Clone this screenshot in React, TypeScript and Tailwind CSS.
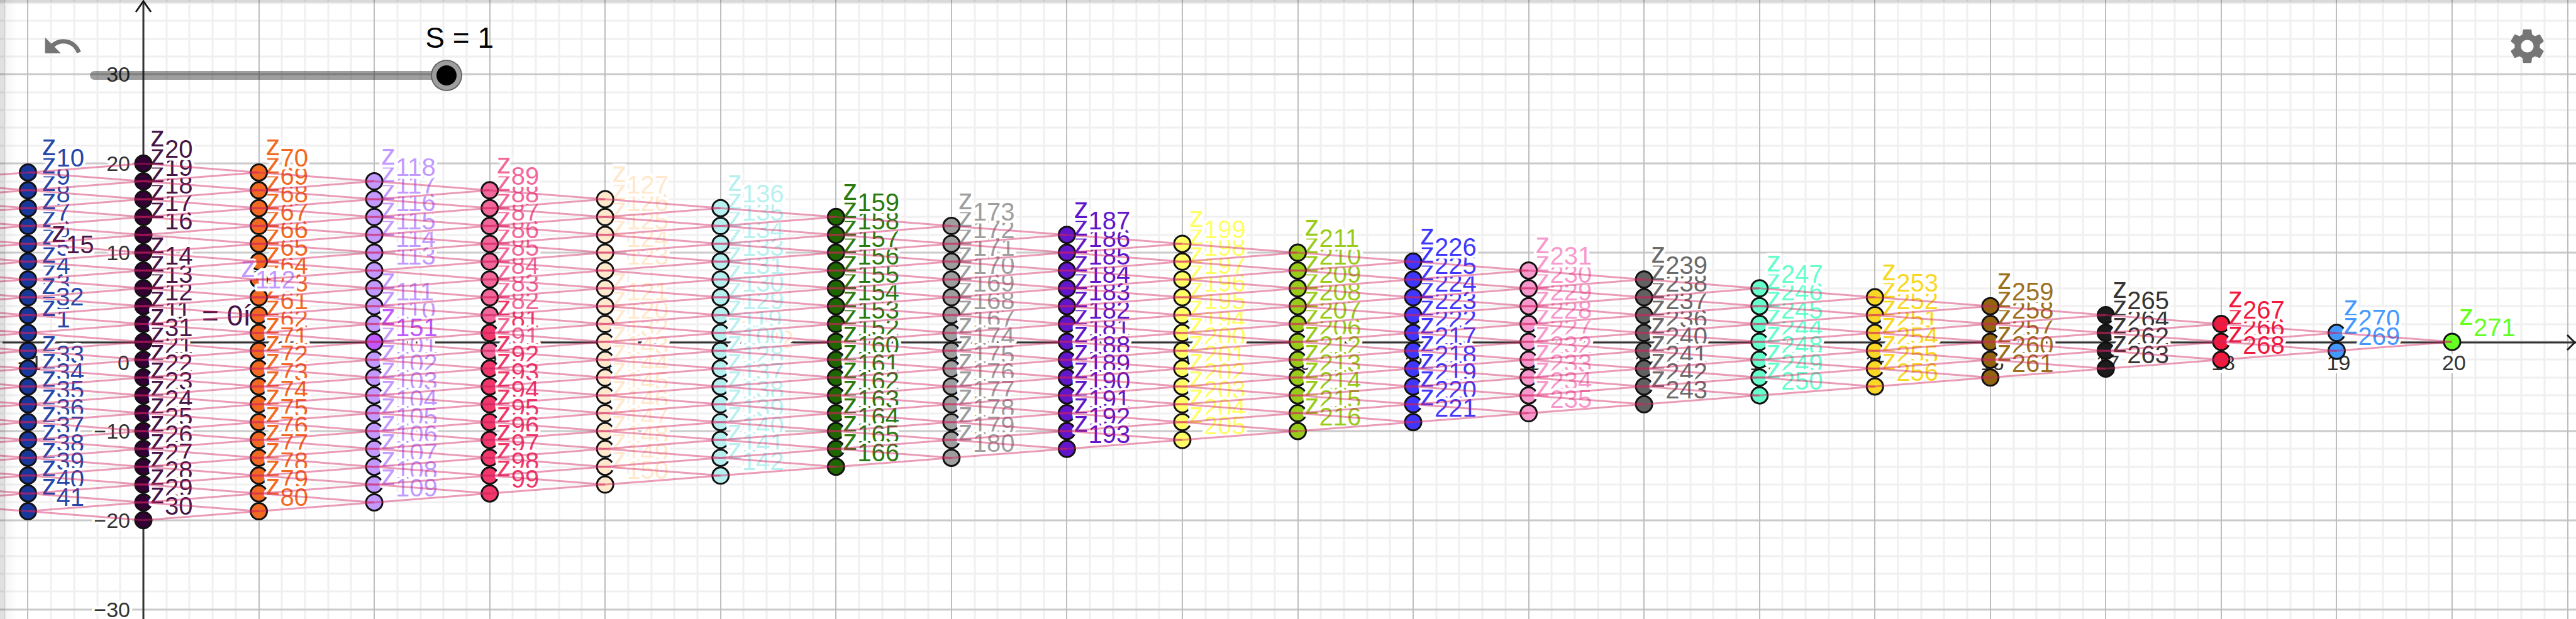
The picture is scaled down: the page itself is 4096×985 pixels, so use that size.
import { useState } from "react";
import { MdSettings, MdUndo } from "react-icons/md";

const WIDTH = 4096;
const HEIGHT = 985;
const ORIGIN_X = 228;
const ORIGIN_Y = 544;
const UNIT_X = 183.55;
const UNIT_Y = 14.19;

const px = (x: number) => ORIGIN_X + x * UNIT_X;
const py = (y: number) => ORIGIN_Y - y * UNIT_Y;

type Column = { x: number; color: string; text?: string; labels: number[] };

const columns: Column[] = [
  { x: -1, color: "#17379b", text: "#2547a8", labels: [10, 9, 8, 7, 6, 5, 4, 3, 2, 1, 32, 33, 34, 35, 36, 37, 38, 39, 40, 41] },
  { x: 0, color: "#330033", text: "#451545", labels: [20, 19, 18, 17, 16, 15, 14, 13, 12, 11, 31, 21, 22, 23, 24, 25, 26, 27, 28, 29, 30] },
  { x: 1, color: "#f26a21", labels: [70, 69, 68, 67, 66, 65, 64, 63, 61, 62, 71, 72, 73, 74, 75, 76, 77, 78, 79, 80] },
  { x: 2, color: "#c299ff", labels: [118, 117, 116, 115, 114, 113, 112, 111, 110, 151, 101, 102, 103, 104, 105, 106, 107, 108, 109] },
  { x: 3, color: "#f0386b", labels: [89, 88, 87, 86, 85, 84, 83, 82, 81, 91, 92, 93, 94, 95, 96, 97, 98, 99] },
  { x: 4, color: "#ffe8cc", labels: [127, 126, 125, 124, 123, 122, 121, 120, 132, 143, 144, 145, 146, 147, 148, 149, 150] },
  { x: 5, color: "#b8f0f0", labels: [136, 135, 134, 133, 131, 130, 129, 119, 100, 128, 137, 138, 139, 140, 141, 142] },
  { x: 6, color: "#1e6600", text: "#2a7a12", labels: [159, 158, 157, 156, 155, 154, 153, 152, 160, 161, 162, 163, 164, 165, 166] },
  { x: 7, color: "#9e9e9e", labels: [173, 172, 171, 170, 169, 168, 167, 174, 175, 176, 177, 178, 179, 180] },
  { x: 8, color: "#6116c9", labels: [187, 186, 185, 184, 183, 182, 181, 188, 189, 190, 191, 192, 193] },
  { x: 9, color: "#ffff66", labels: [199, 198, 197, 196, 195, 194, 200, 201, 202, 203, 204, 205] },
  { x: 10, color: "#99cc1a", labels: [211, 210, 209, 208, 207, 206, 212, 213, 214, 215, 216] },
  { x: 11, color: "#4037ff", labels: [226, 225, 224, 223, 222, 217, 218, 219, 220, 221] },
  { x: 12, color: "#f799cc", labels: [231, 230, 229, 228, 227, 232, 233, 234, 235] },
  { x: 13, color: "#616161", text: "#6b6b6b", labels: [239, 238, 237, 236, 240, 241, 242, 243] },
  { x: 14, color: "#66ffcc", labels: [247, 246, 245, 244, 248, 249, 250] },
  { x: 15, color: "#f8d824", labels: [253, 252, 251, 254, 255, 256] },
  { x: 16, color: "#936312", text: "#9d7020", labels: [259, 258, 257, 260, 261] },
  { x: 17, color: "#1c1c1c", text: "#363636", labels: [265, 264, 262, 263] },
  { x: 18, color: "#f11a3d", labels: [267, 266, 268] },
  { x: 19, color: "#4499ff", labels: [270, 269] },
  { x: 20, color: "#66ff22", labels: [271] },
];

const pointColors: Record<number, string> = { 151: "#bf59ff", 91: "#f2689a" };
for (let n = 82; n <= 89; n++) pointColors[n] = "#f2689a";

// Labels that were dragged away from their points.
const movedLabels: Record<number, [number, number]> = {
  15: [82, 385],
  32: [66, 468],
  112: [383, 441],
  122: [1172, 536],
};

const digitsOnly = new Set([113, 123]);
const raised = new Set([31, 151]);

// Rows are painted outwards from the middle; raised points come last.
function paintOrder(labels: number[]): number[] {
  const half = Math.ceil(labels.length / 2);
  const top = labels.map((_, i) => i).slice(0, half).reverse();
  const bottom = labels.map((_, i) => i).slice(half);
  const rows = [...top, ...bottom];
  return [
    ...rows.filter((i) => !raised.has(labels[i])),
    ...rows.filter((i) => raised.has(labels[i])),
  ];
}

function Grid() {
  const minorX: number[] = [];
  const majorX: number[] = [];
  for (let i = -6; i <= 105; i++) (i % 5 === 0 ? majorX : minorX).push(Math.round(px(i / 5)));
  const minorY: number[] = [];
  const majorY: number[] = [];
  for (let i = -16; i <= 19; i++) (i % 5 === 0 ? majorY : minorY).push(Math.round(py(i * 2)));
  return (
    <g>
      <g stroke="#f0f0f0" strokeWidth={3}>
        {minorY.map((y) => <line key={y} x1={0} x2={WIDTH} y1={y} y2={y} />)}
        {minorX.map((x) => <line key={x} x1={x} x2={x} y1={0} y2={HEIGHT} />)}
      </g>
      <g stroke="#cacaca" strokeWidth={3}>
        {majorY.map((y) => <line key={y} x1={0} x2={WIDTH} y1={y} y2={y} />)}
      </g>
      <g stroke="#bebebe" strokeWidth={2}>
        {majorX.map((x) => <line key={x} x1={x} x2={x} y1={0} y2={HEIGHT} />)}
      </g>
    </g>
  );
}

function Axes() {
  const xs = Array.from({ length: 20 }, (_, i) => i + 1);
  const minus = (n: number) => (n < 0 ? `−${-n}` : `${n}`);
  return (
    <g>
      <g stroke="#333333" strokeWidth={3} fill="none">
        <line x1={4} x2={WIDTH} y1={545} y2={545} />
        <line x1={228} x2={228} y1={2} y2={HEIGHT} />
        <path d="M4082 533 L4094 545 L4082 557" stroke="#1c1c1c" />
        <path d="M216 19 L228 2 L240 19" stroke="#1c1c1c" />
      </g>
      <g fill="#333333" stroke="#ffffff" strokeWidth={9} strokeLinejoin="round" style={{ paintOrder: "stroke" }} fontSize={34}>
        {[20, 10, -10, -20, -30].map((n) => (
          <text key={n} x={207} y={Math.round(py(n)) + 12} textAnchor="end">{minus(n)}</text>
        ))}
        <text x={206} y={589} textAnchor="end">0</text>
        {[-1, ...xs].map((n) => (
          <text key={n} x={px(n) + 3} y={589} textAnchor="middle">{minus(n)}</text>
        ))}
      </g>
      <text x={207} y={130} textAnchor="end" fontSize={34} fill="#333333">30</text>
    </g>
  );
}

function PointLabel({ n, x, y, color }: { n: number; x: number; y: number; color: string }) {
  return (
    <text x={x} y={y} fontSize={46} fill={color} stroke="#ffffff" strokeWidth={9} strokeLinejoin="round" style={{ paintOrder: "stroke" }}>
      {digitsOnly.has(n) ? (
        <tspan dx={23} dy={18} fontSize={40}>{n}</tspan>
      ) : (
        <>
          z<tspan dy={18} fontSize={40}>{n}</tspan>
        </>
      )}
      {n === 11 && <tspan x={321} y={518}>= 0í</tspan>}
    </text>
  );
}

function Points() {
  return (
    <g>
      {columns.map(({ x, color, text, labels }) =>
        paintOrder(labels).map((row) => {
          const n = labels[row];
          const cx = px(x);
          const cy = py(labels.length - 1 - 2 * row);
          const fill = pointColors[n] ?? color;
          const [lx, ly] = movedLabels[n] ?? [cx + (x === -1 ? 22 : 11), cy - 27];
          return (
            <g key={n}>
              <circle cx={cx} cy={cy} r={13} fill={fill} stroke="#111111" strokeWidth={3} />
              <PointLabel n={n} x={lx} y={ly} color={text ?? fill} />
            </g>
          );
        }),
      )}
    </g>
  );
}

function Segments() {
  const segments: { key: string; x: number; y: number; to: number }[] = [];
  for (let x = -2; x < 20; x++) {
    const reach = 20 - Math.abs(x);
    const nextReach = 20 - Math.abs(x + 1);
    for (let y = reach; y >= -reach; y -= 2) {
      for (const to of [y + 1, y - 1]) {
        if (Math.abs(to) <= nextReach) segments.push({ key: `${x},${y},${to}`, x, y, to });
      }
    }
  }
  return (
    <g stroke="#d1215f" strokeOpacity={0.45} strokeWidth={3}>
      {segments.map((s) => (
        <line key={s.key} x1={px(s.x)} y1={py(s.y)} x2={px(s.x + 1)} y2={py(s.to)} />
      ))}
    </g>
  );
}

export default function App() {
  const [s, setS] = useState(1);
  return (
    <main className="relative w-full overflow-hidden bg-white font-['Liberation_Sans',Arial,sans-serif]">
      <svg viewBox={`0 0 ${WIDTH} ${HEIGHT}`} className="block h-auto w-full" role="img" aria-label="Graphics view">
        <Grid />
        <Axes />
        <Points />
        <Segments />
      </svg>

      <div className="pointer-events-none absolute inset-x-0 top-0 h-1 bg-black/15" />
      <div className="pointer-events-none absolute inset-y-0 left-0 flex">
        <div className="w-2 bg-black/12" />
        <div className="w-5 bg-gradient-to-r from-black/4 to-transparent" />
      </div>

      <button type="button" aria-label="Undo" className="absolute left-[66px] top-10 text-[#757575]">
        <MdUndo size={67} />
      </button>
      <button type="button" aria-label="Settings" className="absolute right-11 top-10 text-[#757575]">
        <MdSettings size={67} />
      </button>

      <div className="absolute left-[143px] top-[37px] flex w-[642px] flex-col gap-3">
        <label htmlFor="s" className="self-end whitespace-nowrap text-[46px] leading-[46px] text-black">
          S = {s}
        </label>
        <input
          id="s"
          type="range"
          min={0}
          max={1}
          step={1}
          value={s}
          onChange={(e) => setS(Number(e.target.value))}
          className="m-0 h-[50px] w-[590px] appearance-none bg-transparent [&::-webkit-slider-runnable-track]:h-[14px] [&::-webkit-slider-runnable-track]:rounded-full [&::-webkit-slider-runnable-track]:bg-black/38 [&::-webkit-slider-thumb]:-mt-4 [&::-webkit-slider-thumb]:size-[46px] [&::-webkit-slider-thumb]:appearance-none [&::-webkit-slider-thumb]:rounded-full [&::-webkit-slider-thumb]:border-[7px] [&::-webkit-slider-thumb]:border-[#9e9e9e] [&::-webkit-slider-thumb]:bg-black [&::-webkit-slider-thumb]:shadow-[0_0_0_2px_#666666]"
        />
      </div>
    </main>
  );
}
